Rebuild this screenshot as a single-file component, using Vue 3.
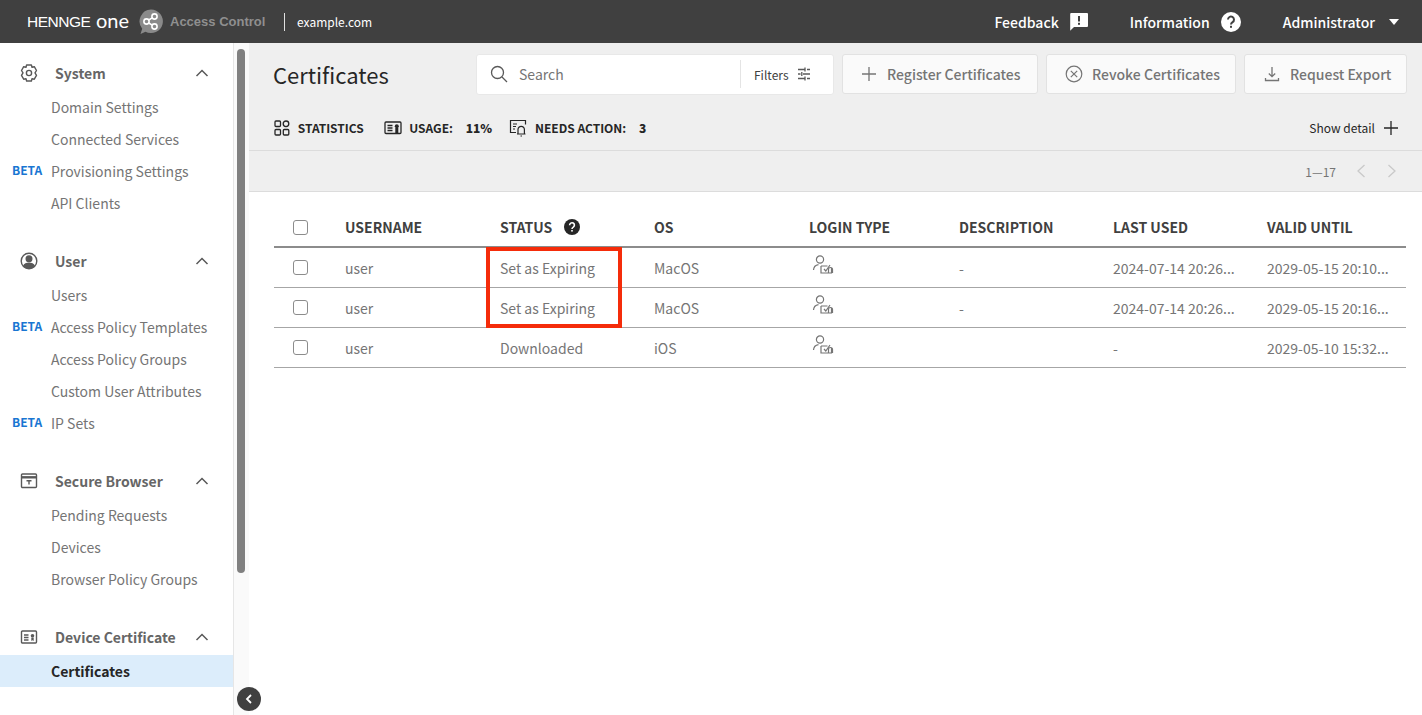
<template>
  <div class="page">
    <header class="topbar">
      <div class="brand">
        <span class="logo-hennge">HENNGE</span>
        <span class="logo-one">one</span>
        <svg class="logo-mark" width="24" height="26" viewBox="0 0 24 26">
          <path d="M12 .5a11.8 11.8 0 1 1-5.5 22.2L1.5 25l1.7-5.3A11.8 11.8 0 0 1 12 .5z" fill="#8a8a8a" />
          <circle cx="7.5" cy="12.5" r="2.6" fill="none" stroke="#fff" stroke-width="1.6" />
          <circle cx="15.5" cy="7.5" r="2.6" fill="none" stroke="#fff" stroke-width="1.6" />
          <circle cx="15.5" cy="17.5" r="2.6" fill="none" stroke="#fff" stroke-width="1.6" />
          <path d="M9.8 11l3.4-2.2M9.8 14l3.4 2.2" stroke="#fff" stroke-width="1.6" />
        </svg>
        <span class="logo-product">Access Control</span>
        <span class="brand-divider"></span>
        <span class="tenant">example.com</span>
      </div>
      <nav class="top-actions">
        <a class="top-link">
          Feedback
          <svg width="18" height="18" viewBox="0 0 18 18">
            <path d="M1 0h16a1 1 0 0 1 1 1v12a1 1 0 0 1-1 1H4l-3.800 3.800V1a1 1 0 0 1 1-1z" fill="#fff" />
            <rect x="8" y="3" width="2" height="5.500" fill="#404040" />
            <rect x="8" y="9.800" width="2" height="2" fill="#404040" />
          </svg>
        </a>
        <a class="top-link">
          Information
          <svg width="20" height="20" viewBox="0 0 20 20">
            <circle cx="10" cy="10" r="10" fill="#fff" />
            <path d="M7 7.600a3 3 0 1 1 4.600 2.500c-1 .7-1.600 1.200-1.600 2.400" fill="none" stroke="#404040" stroke-width="2" />
            <rect x="9" y="13.800" width="2" height="2" fill="#404040" />
          </svg>
        </a>
        <a class="top-link admin">
          Administrator
          <span class="caret"></span>
        </a>
      </nav>
    </header>

    <div class="body">
      <aside class="sidebar">
        <div v-for="group in groups" :key="group.title" class="group">
          <div class="group-head">
            <svg class="group-icon" width="20" height="20" viewBox="0 0 20 20" fill="none" stroke="#595959" stroke-width="1.400">
              <template v-if="group.icon === 'gear'">
                <path d="M7.600 2h4.800l.6 2.200 2.300-.5 2.200 3.800L16 9.900l1.500 2.500-2.200 3.800-2.300-.5-.6 2.300H7.600L7 15.700l-2.300.5-2.200-3.800L4 9.900 2.500 7.500l2.200-3.800 2.300.5z" stroke-linejoin="round" />
                <circle cx="10" cy="10" r="2.600" />
              </template>
              <template v-else-if="group.icon === 'user'">
                <circle cx="10" cy="10" r="7.800" />
                <circle cx="10" cy="7.800" r="2.800" fill="#595959" />
                <path d="M4 15c1-2.600 3.400-3.400 6-3.400s5 .8 6 3.400c-1.500 1.800-3.700 2.800-6 2.800s-4.500-1-6-2.800z" fill="#595959" stroke="none" />
              </template>
              <template v-else-if="group.icon === 'browser'">
                <rect x="2.500" y="3" width="15" height="13.500" rx="1" />
                <path d="M2.500 6.300h15" stroke-width="2.400" />
                <path d="M7.500 9.800h5M10 9.800v3.800" />
              </template>
              <template v-else>
                <rect x="2.500" y="4" width="15" height="12" rx="1" />
                <path d="M5 8h4.500M5 10.500h4.500M5 13h4.500" />
                <circle cx="13.500" cy="8.800" r="1.800" fill="#595959" stroke="none" />
                <path d="M12.300 10.500v3.500l1.200-.8 1.200.8v-3.500z" fill="#595959" stroke="none" />
              </template>
            </svg>
            <span class="group-title">{{ group.title }}</span>
            <svg class="chevron" width="14" height="8" viewBox="0 0 14 8" fill="none" stroke="#595959" stroke-width="1.500">
              <path d="M1.500 7L7 1.500 12.500 7" />
            </svg>
          </div>
          <a
            v-for="item in group.items"
            :key="item.label"
            class="nav-item"
            :class="{ active: item.active }"
          >
            <span v-if="item.beta" class="beta">BETA</span>
            {{ item.label }}
          </a>
        </div>
      </aside>

      <div class="rail">
        <div class="rail-thumb"></div>
        <button class="collapse">
          <svg width="8" height="10" viewBox="0 0 8 10" fill="none" stroke="#fff" stroke-width="1.800">
            <path d="M6 1L2 5l4 4" />
          </svg>
        </button>
      </div>

      <main class="main">
        <section class="toolbar">
          <div class="title-row">
            <h1>Certificates</h1>
            <div class="search">
              <svg width="18" height="18" viewBox="0 0 18 18" fill="none" stroke="#595959" stroke-width="1.300">
                <circle cx="7.500" cy="7.500" r="6" />
                <path d="M12 12l5 5" />
              </svg>
              <span class="search-text">Search</span>
              <span class="filters">
                Filters
                <svg width="14" height="14" viewBox="0 0 14 14" stroke="#595959" stroke-width="1.300" fill="none">
                  <path d="M1 2.500h6.500M10 2.500h3M1 7h2.500M6 7h7M1 11.500h6.500M10 11.500h3M8 .5v4M4.800 5v4M8 9.500v4" />
                </svg>
              </span>
            </div>
            <button class="btn btn-register">
              <svg width="14" height="14" viewBox="0 0 14 14" stroke="#757575" stroke-width="1.300"><path d="M7 0v14M0 7h14" /></svg>
              Register Certificates
            </button>
            <button class="btn btn-revoke">
              <svg width="18" height="18" viewBox="0 0 18 18" fill="none" stroke="#757575" stroke-width="1.200">
                <circle cx="9" cy="9" r="7.800" />
                <path d="M5.800 5.800l6.400 6.400M12.200 5.800l-6.400 6.400" />
              </svg>
              Revoke Certificates
            </button>
            <button class="btn btn-export">
              <svg width="16" height="16" viewBox="0 0 16 16" fill="none" stroke="#757575" stroke-width="1.300">
                <path d="M8 1v9.500M4.800 7.500L8 10.700l3.200-3.200M1.500 12v2.500h13V12" />
              </svg>
              Request Export
            </button>
          </div>
          <div class="stats-row">
            <span class="stat">
              <svg width="16" height="16" viewBox="0 0 16 16" fill="none" stroke="#262626" stroke-width="1.300">
                <rect x="1" y="1" width="5.500" height="5.500" rx="1" />
                <circle cx="12" cy="3.800" r="2.800" />
                <rect x="1" y="9.500" width="5.500" height="5.500" rx="1" />
                <rect x="9.300" y="9.500" width="5.500" height="5.500" rx="1" />
              </svg>
              STATISTICS
            </span>
            <span class="stat">
              <svg width="18" height="16" viewBox="0 0 18 16" fill="none" stroke="#262626" stroke-width="1.300">
                <rect x="1" y="2" width="16" height="11.500" rx="1" />
                <path d="M3.500 5.500h5M3.500 8h5M3.500 10.500h5" />
                <circle cx="12.800" cy="6.300" r="2" fill="#262626" stroke="none" />
                <path d="M11.300 8v6l1.500-1 1.500 1V8z" fill="#262626" stroke="none" />
              </svg>
              USAGE: <b>11%</b>
            </span>
            <span class="stat">
              <svg width="18" height="18" viewBox="0 0 18 18" fill="none" stroke="#262626" stroke-width="1.200">
                <path d="M7 13.500H1.500V1.500h15v4" />
                <path d="M4 5h4M4 7.500h3M4 10h2" />
                <path d="M9 15V10.500a3.200 3.200 0 0 1 6.400 0V15M8 15h8.500M11.500 17h1.500" />
              </svg>
              NEEDS ACTION: <b>3</b>
            </span>
            <span class="show-detail">
              Show detail
              <svg width="14" height="14" viewBox="0 0 14 14" stroke="#262626" stroke-width="1.300"><path d="M7 0v14M0 7h14" /></svg>
            </span>
          </div>
          <div class="pager-row">
            <span class="pager-count">1—17</span>
            <svg width="10" height="14" viewBox="0 0 10 14" fill="none" stroke="#c9c9c9" stroke-width="1.300"><path d="M8.500 1L2 7l6.500 6" /></svg>
            <svg width="10" height="14" viewBox="0 0 10 14" fill="none" stroke="#c9c9c9" stroke-width="1.300"><path d="M1.500 1L8 7l-6.500 6" /></svg>
          </div>
        </section>

        <section class="table-wrap">
          <div class="row head-row">
            <span class="cell-check"><span class="checkbox"></span></span>
            <span>USERNAME</span>
            <span class="status-head">
              STATUS
              <svg width="16" height="16" viewBox="0 0 16 16">
                <circle cx="8" cy="8" r="8" fill="#262626" />
                <path d="M5.600 6.200a2.400 2.400 0 1 1 3.700 2c-.8.500-1.300.9-1.300 1.900" fill="none" stroke="#fff" stroke-width="1.600" />
                <rect x="7.200" y="11" width="1.600" height="1.600" fill="#fff" />
              </svg>
            </span>
            <span>OS</span>
            <span>LOGIN TYPE</span>
            <span>DESCRIPTION</span>
            <span>LAST USED</span>
            <span>VALID UNTIL</span>
          </div>
          <div v-for="(row, i) in rows" :key="i" class="row body-row">
            <span class="cell-check"><span class="checkbox"></span></span>
            <span>{{ row.user }}</span>
            <span>{{ row.status }}</span>
            <span>{{ row.os }}</span>
            <span class="login-cell">
              <svg width="22" height="20" viewBox="0 0 22 20" fill="none" stroke="#757575" stroke-width="1.200">
                <circle cx="8" cy="4.500" r="3.600" />
                <path d="M1.500 15c.2-3 2.200-5 5-5.400" />
                <path d="M9 11h6.500M9 11v7h10.500v-5" />
                <path d="M12 14l1.800 2 4.200-6" />
                <path d="M16.500 18v-3.500a2 2 0 0 1 4 0V18" />
              </svg>
            </span>
            <span>{{ row.description }}</span>
            <span class="clip">{{ row.lastUsed }}</span>
            <span class="clip">{{ row.validUntil }}</span>
          </div>
          <div class="highlight"></div>
        </section>
      </main>
    </div>
  </div>
</template>

<script setup>
const groups = [
  {
    title: 'System',
    icon: 'gear',
    items: [
      { label: 'Domain Settings' },
      { label: 'Connected Services' },
      { label: 'Provisioning Settings', beta: true },
      { label: 'API Clients' }
    ]
  },
  {
    title: 'User',
    icon: 'user',
    items: [
      { label: 'Users' },
      { label: 'Access Policy Templates', beta: true },
      { label: 'Access Policy Groups' },
      { label: 'Custom User Attributes' },
      { label: 'IP Sets', beta: true }
    ]
  },
  {
    title: 'Secure Browser',
    icon: 'browser',
    items: [
      { label: 'Pending Requests' },
      { label: 'Devices' },
      { label: 'Browser Policy Groups' }
    ]
  },
  {
    title: 'Device Certificate',
    icon: 'cert',
    items: [{ label: 'Certificates', active: true }]
  }
]

const rows = [
  { user: 'user', status: 'Set as Expiring', os: 'MacOS', description: '-', lastUsed: '2024-07-14 20:26...', validUntil: '2029-05-15 20:10...' },
  { user: 'user', status: 'Set as Expiring', os: 'MacOS', description: '-', lastUsed: '2024-07-14 20:26...', validUntil: '2029-05-15 20:16...' },
  { user: 'user', status: 'Downloaded', os: 'iOS', description: '', lastUsed: '-', validUntil: '2029-05-10 15:32...' }
]
</script>

<style>
html,
body {
  margin: 0;
  height: 100%;
  overflow: hidden;
}
</style>

<style scoped>
.page {
  width: 1422px;
  height: 715px;
  display: flex;
  flex-direction: column;
  overflow: hidden;
  background: #fff;
  font-family: "Noto Sans CJK JP", "Noto Sans", sans-serif;
  font-size: 14px;
  color: #666;
}

.topbar {
  height: 43px;
  flex: none;
  display: flex;
  align-items: center;
  justify-content: space-between;
  background: #404040;
  color: #fff;
  padding: 0 23px 0 27px;
}

.brand {
  display: flex;
  align-items: center;
}

.logo-hennge {
  font-family: "Liberation Sans", sans-serif;
  font-size: 15.5px;
  letter-spacing: -0.5px;
  width: 69px;
}

.logo-one {
  font-family: "Lato", sans-serif;
  font-size: 20px;
  line-height: 20px;
  width: 43px;
  margin-top: -4px;
}

.logo-mark {
  margin-right: 7px;
}

.logo-product {
  font-family: "Liberation Sans", sans-serif;
  font-weight: 700;
  font-size: 13px;
  color: #8f8f8f;
  width: 114px;
}

.brand-divider {
  width: 1px;
  height: 18px;
  background: #e0e0e0;
  margin-right: 12px;
}

.tenant {
  font-size: 12px;
}

.top-actions {
  display: flex;
  align-items: center;
}

.top-link {
  display: flex;
  align-items: center;
  gap: 11px;
  font-size: 14px;
  font-weight: 500;
  margin-left: 42px;
}

.admin {
  margin-left: 42px;
  gap: 14px;
}

.caret {
  width: 0;
  height: 0;
  border-left: 5.500px solid transparent;
  border-right: 5.500px solid transparent;
  border-top: 6px solid #fff;
}

.body {
  flex: 1;
  display: flex;
  min-height: 0;
}

.sidebar {
  width: 233px;
  flex: none;
  padding-top: 14px;
  box-sizing: border-box;
  border-right: 0;
}

.group {
  margin-bottom: 26px;
}

.group-head {
  height: 32px;
  margin-bottom: 2px;
  display: flex;
  align-items: center;
  padding-left: 19px;
  color: #666;
}

.group-icon {
  flex: none;
}

.group-title {
  font-weight: 700;
  margin-left: 16px;
  flex: 1;
}

.chevron {
  margin-right: 24px;
}

.nav-item {
  display: block;
  position: relative;
  height: 32px;
  line-height: 32px;
  padding-left: 51px;
  color: #757575;
}

.nav-item.active {
  background: #dcedfb;
  color: #262626;
  font-weight: 700;
}

.beta {
  position: absolute;
  left: 12px;
  top: -1px;
  font-size: 12px;
  font-weight: 700;
  color: #1976d2;
}

.rail {
  width: 16px;
  flex: none;
  position: relative;
  background: #fafafa;
  border-left: 1px solid #e6e6e6;
  box-sizing: border-box;
}

.rail-thumb {
  position: absolute;
  left: 3px;
  top: 6px;
  width: 8px;
  height: 524px;
  border-radius: 4px;
  background: #808080;
}

.collapse {
  position: absolute;
  left: 3px;
  top: 644px;
  width: 24px;
  height: 24px;
  border: 0;
  padding: 0;
  border-radius: 50%;
  background: #404040;
  display: flex;
  align-items: center;
  justify-content: center;
  z-index: 2;
}

.main {
  flex: 1;
  min-width: 0;
  border-left: 0;
}

.toolbar {
  background: #efefef;
  height: 149px;
  box-sizing: border-box;
  border-bottom: 1px solid #dcdcdc;
  display: flex;
  flex-direction: column;
}

.title-row {
  height: 62px;
  flex: none;
  display: flex;
  align-items: center;
  padding: 0 15px 0 24px;
  box-sizing: border-box;
}

h1 {
  margin: 0;
  width: 203px;
  font-size: 22px;
  font-weight: 400;
  color: #262626;
}

.search {
  width: 358px;
  height: 41px;
  box-sizing: border-box;
  flex: none;
  background: #fff;
  border-radius: 3px;
  border: 1px solid #e8e8e8;
  display: flex;
  align-items: center;
  padding-left: 13px;
  margin-right: 8px;
}

.search-text {
  flex: 1;
  margin-left: 11px;
  color: #757575;
}

.filters {
  width: 93px;
  height: 28px;
  box-sizing: border-box;
  border-left: 1px solid #e4e4e4;
  display: flex;
  align-items: center;
  gap: 8px;
  padding-left: 13px;
  font-size: 12px;
  color: #404040;
}

.btn {
  height: 40px;
  box-sizing: border-box;
  flex: none;
  border: 1px solid #e2e2e2;
  border-radius: 3px;
  background: #fafafa;
  color: #757575;
  font: inherit;
  font-size: 14px;
  font-weight: 500;
  display: flex;
  align-items: center;
  padding: 0;
}

.btn-register {
  width: 196px;
  gap: 11px;
  padding-left: 19px;
  margin-right: 8px;
}

.btn-revoke {
  width: 190px;
  gap: 9px;
  padding-left: 18px;
  margin-right: 8px;
}

.btn-export {
  width: 163px;
  gap: 10px;
  padding-left: 19px;
}

.stats-row {
  height: 46px;
  flex: none;
  display: flex;
  align-items: center;
  padding: 0 24px 0 25px;
  border-bottom: 1px solid #dcdcdc;
  font-size: 12px;
  font-weight: 700;
  color: #262626;
  box-sizing: border-box;
}

.stat {
  display: flex;
  align-items: center;
  gap: 5px;
  margin-right: 17px;
  white-space: pre;
}

.stat b {
  margin-left: 5px;
}

.show-detail {
  margin-left: auto;
  display: flex;
  align-items: center;
  gap: 9px;
  font-weight: 400;
}

.pager-row {
  flex: 1;
  display: flex;
  align-items: center;
  justify-content: flex-end;
  gap: 21px;
  padding-right: 25px;
  font-size: 12px;
  color: #757575;
}

.pager-count {
  margin-right: -1px;
}

.table-wrap {
  position: relative;
  padding: 16px 16px 0 25px;
}

.row {
  display: grid;
  grid-template-columns: 71px 155px 154px 155px 150px 154px 154px 139px;
  align-items: center;
}

.head-row {
  height: 40px;
  border-bottom: 2px solid #8c8c8c;
  box-sizing: border-box;
  font-weight: 700;
  color: #404040;
}

.status-head {
  display: flex;
  align-items: center;
  gap: 12px;
}

.body-row {
  height: 40px;
  box-sizing: border-box;
  border-bottom: 1px solid #a6a6a6;
  color: #757575;
}

.cell-check {
  display: flex;
  padding-left: 19px;
}

.checkbox {
  width: 15px;
  height: 15px;
  box-sizing: border-box;
  border: 1px solid #8c8c8c;
  border-radius: 3px;
  background: #fff;
}

.login-cell {
  display: flex;
  padding-left: 3px;
  margin-top: -5px;
}

.clip {
  white-space: nowrap;
  overflow: hidden;
}

.highlight {
  position: absolute;
  left: 237px;
  top: 55px;
  width: 136px;
  height: 81px;
  box-sizing: border-box;
  border: 4px solid #f52c0a;
  pointer-events: none;
}
</style>
